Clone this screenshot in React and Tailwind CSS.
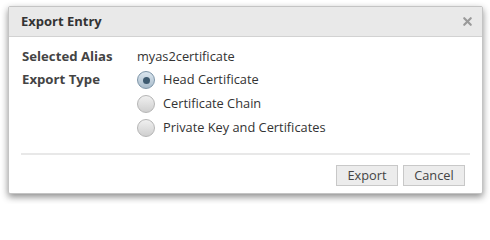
import { X } from "lucide-react";

const options = ["Head Certificate", "Certificate Chain", "Private Key and Certificates"];

const Radio = ({ checked }) =>
  checked ? (
    <span className="flex h-[18px] w-[18px] items-center justify-center rounded-full border border-[#7d95a8] bg-gradient-to-b from-[#dbe6ef] to-[#a9bccb]">
      <span className="h-[7px] w-[7px] rounded-full bg-[#3d5a70]" />
    </span>
  ) : (
    <span className="h-[18px] w-[18px] rounded-full border border-[#b5b5b5] bg-gradient-to-b from-[#f0f0f0] to-[#cfcfcf]" />
  );

export default function App() {
  const selected = 0;

  return (
    <div className="h-[204px] w-[490px] bg-white pl-[8px] pt-[6px] font-['Open_Sans',sans-serif] text-[12.8px] text-[#333]">
      <div className="flex h-[188px] w-[475px] flex-col rounded-[2px] border border-[#c4c4c4] bg-white shadow-[0_3px_7px_rgba(0,0,0,0.45)]">
        {/* header */}
        <div className="flex h-[30px] items-center justify-between border-b border-[#d2d2d2] bg-[#e9e9e9] pl-[12px] pr-[8px]">
          <span className="text-[13px] font-bold text-[#333]">Export Entry</span>
          <X size={13} strokeWidth={4} className="text-[#9a9a9a]" />
        </div>

        {/* body */}
        <div className="grid grid-cols-[115px_1fr] gap-y-[1px] px-[13px] pt-[9px]">
          <span className="flex h-[22px] items-center text-[13.2px] font-bold text-[#444]">Selected Alias</span>
          <span className="flex h-[22px] items-center text-[#333]">myas2certificate</span>
          <span className="flex h-[22px] items-center text-[13.2px] font-bold text-[#444]">Export Type</span>
          <div className="flex flex-col gap-[6px] pt-[2px]">
            {options.map((o, i) => (
              <label key={o} className="flex h-[18px] items-center gap-[8px]">
                <Radio checked={i === selected} />
                <span>{o}</span>
              </label>
            ))}
          </div>
        </div>

        <div className="mx-[12px] mt-[16px] h-[2px] bg-[#e8e8e8]" />

        <div className="flex justify-end gap-[5px] pr-[17px] pt-[10px]">
          <button className="h-[21px] w-[62px] border border-[#c8c8c8] bg-[#ececec] text-[12.8px] text-[#444]">Export</button>
          <button className="h-[21px] w-[62px] border border-[#c8c8c8] bg-[#ececec] text-[12.8px] text-[#444]">Cancel</button>
        </div>
      </div>
    </div>
  );
}
